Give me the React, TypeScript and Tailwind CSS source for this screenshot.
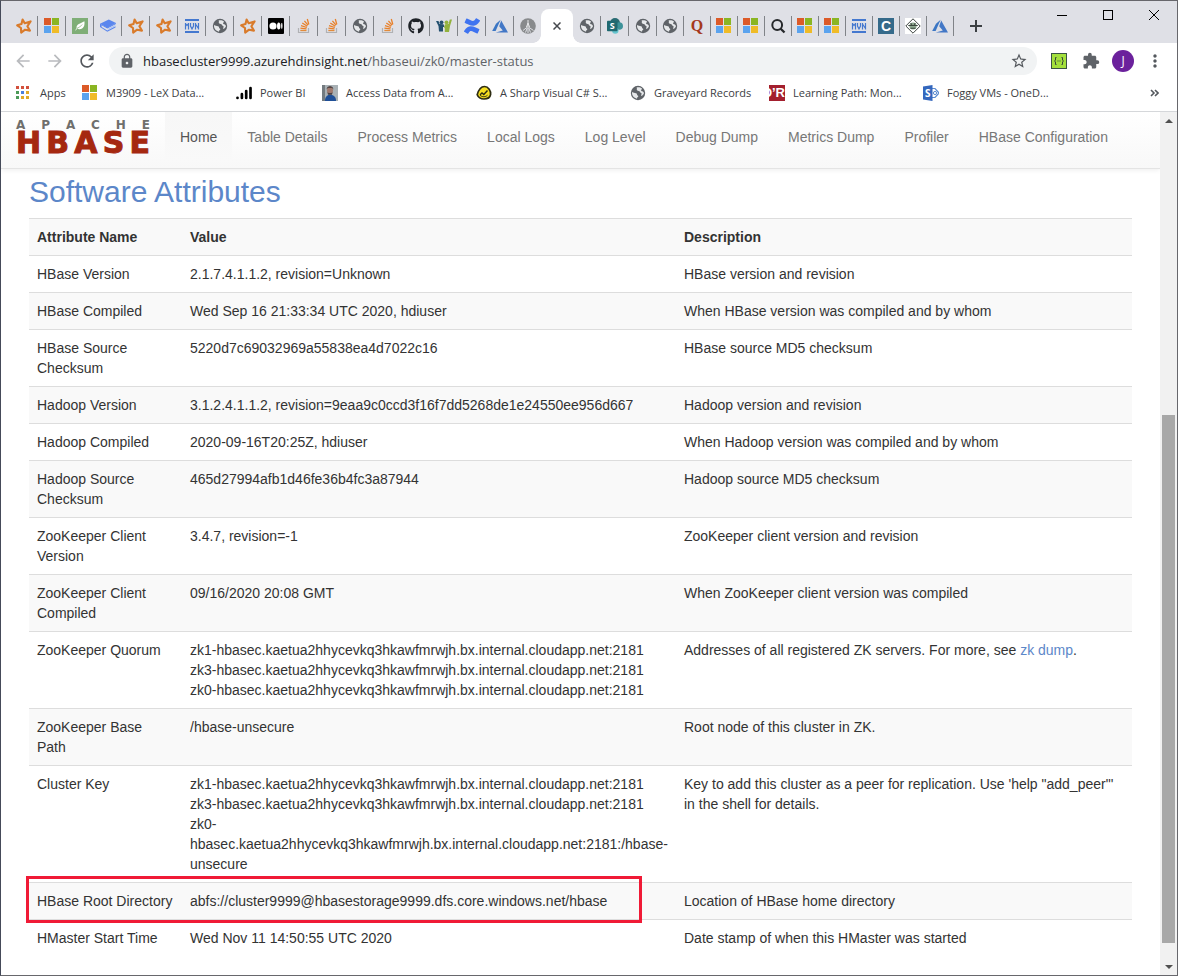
import type { ReactNode } from "react";
import {
  MdArrowBack,
  MdArrowForward,
  MdExtension,
  MdLock,
  MdMoreVert,
  MdRefresh,
  MdStarBorder,
} from "react-icons/md";
import { FaGithub } from "react-icons/fa";
import { SiConfluence } from "react-icons/si";

/* ---------- favicons ---------- */

const StarIcon = () => (
  <svg viewBox="0 0 16 16" className="size-4">
    <path
      d="M6.6 1.6 L8.7 5.2 L14.6 3.4 L11.4 8.3 L13.9 12.6 L9.1 11.7 L5.2 14.6 L5 10 L1.2 7.3 L5.5 5.9 Z"
      fill="none"
      stroke="#d97b2b"
      strokeWidth="2.100"
      strokeLinejoin="round"
    />
  </svg>
);

const MicrosoftIcon = () => (
  <svg viewBox="0 0 16 16" className="size-4">
    <path d="M0 0h7v7H0z" fill="#dc5a28" />
    <path d="M8 0h7v7H8z" fill="#8ab522" />
    <path d="M0 8h7v7H0z" fill="#5ba3ee" />
    <path d="M8 8h7v7H8z" fill="#efbb27" />
  </svg>
);

const LeafIcon = () => (
  <svg viewBox="0 0 16 16" className="size-4">
    <path d="M0 0h16v16H0z" fill="#7fae77" />
    <path d="M12.4 3.2 C13 7.500 11.500 11.200 7.600 11.200 C6.500 11.300 5.700 11 5.200 10.600 L3.800 12.600 L3.300 12.200 L4.600 10 C4 6 8.500 5.800 12.400 3.200 Z" fill="#fff" />
    <path d="M4.800 10.400 Q8 9.500 10.200 6.500" fill="none" stroke="#7fae77" strokeWidth="0.7" />
  </svg>
);

const BookIcon = () => (
  <svg viewBox="0 0 16 16" className="size-4">
    <path d="M0 5.800 L8.800 1.600 L16 5 L7.300 9.800 Z" fill="#5a86ee" />
    <path d="M0 5.800 V9 L7.300 13.800 L15.500 9.400 V8.200 L7.300 12.400 L1.600 8.900 V7.200 L7.300 10.600 L16 6 V5 L7.300 9.300 Z" fill="#5a86ee" />
    <path d="M8 10.700 L15.200 7 V8 L8 11.900 Z" fill="#a9c3f7" />
  </svg>
);

const MvnIcon = () => (
  <svg viewBox="0 0 16 16" className="size-4">
    <path d="M1 1h14v2H1zM1 13h14v2H1z" fill="#4478cf" />
    <path
      d="M1.500 11.500V5M1.500 5.500l1.500 2 1.500-2M4.500 5v6.500M6.500 5v3l1.500 3 1.500-3V5M11.500 11.500V5M11.500 6l3 4.500M14.500 5v6.500"
      fill="none"
      stroke="#4478cf"
      strokeWidth="1.200"
    />
  </svg>
);

const GlobeIcon = () => (
  <svg viewBox="0 0 16 16" className="size-4">
    <circle cx="8" cy="8" r="7.200" fill="#5f6368" />
    <path d="M2 7 C3.500 7.800 4.500 8 6 8.200 C7.200 8.500 7 9.600 7.300 10.200 C8.800 10.500 8.500 12 7.300 12.200 L7 13.700 C4 13 1.700 10.500 2 7 Z" fill="#e6e8ea" />
    <path d="M6.500 2.600 C7.500 3.300 6.300 4.300 7 5.200 C8 6.200 9.500 5.600 9.900 6.700 C10.200 8 11.300 7.600 11.600 8.500 C11.800 9.500 10.500 10.300 11.600 11 C12.600 10.300 13.700 9.500 14 8 C13.600 6.800 12.500 6 11.200 6 C10.800 4.500 12 4.700 12 3.600 C10.500 2.200 8 2 6.500 2.600 Z" fill="#e6e8ea" />
  </svg>
);

const MediumIcon = () => (
  <svg viewBox="0 0 16 16" className="size-4">
    <rect width="16" height="16" rx="1" fill="#000" />
    <circle cx="5" cy="8" r="3.600" fill="#fff" />
    <ellipse cx="10.700" cy="8" rx="1.700" ry="3.500" fill="#fff" />
    <ellipse cx="13.800" cy="8" rx="0.700" ry="3.200" fill="#fff" />
  </svg>
);

const StackIcon = () => (
  <svg viewBox="0 0 16 16" className="size-4" fill="none">
    <path d="M2.500 10v4.500h10V10" stroke="#b0b1b4" strokeWidth="1.200" />
    <path d="M4.300 12.500h6.200" stroke="#e28b3a" strokeWidth="1.400" />
    <path d="M4.400 10.100l6.100.8M5 7.600l5.800 1.900M6.300 5l5 3.300M8.400 2.800l3.600 4.400M11.300 1l1.500 5.500" stroke="#e8802a" strokeWidth="1.300" />
  </svg>
);

const GithubIcon = () => <FaGithub className="size-4 text-[#1f2328]" />;

const PeopleIcon = () => (
  <svg viewBox="0 0 16 16" className="size-4">
    <circle cx="5.500" cy="4.300" r="1.900" fill="#24506f" />
    <circle cx="10.500" cy="4.300" r="1.900" fill="#93b23c" />
    <path d="M0 3 L2.500 3 L3.500 6 L7.500 6.300 L8.500 9 L7 9 L7 13.500 L3 13.500 L2.500 8 Z" fill="#24506f" />
    <path d="M16 1.500 L13.800 1.500 L12.500 6 L9 6.300 L8 9.500 L8.800 10 L8.800 14 L13 14 L14 8 Z" fill="#93b23c" />
  </svg>
);

const ConfluenceIcon = () => <SiConfluence className="size-4 text-[#3f73f0]" />;

const AzureIcon = () => (
  <svg viewBox="0 0 16 16" className="size-4">
    <path d="M8.600 1.700 L4 5.700 L0.200 13 L3.600 13 Z" fill="#3b76c4" />
    <path d="M9.200 2.600 L7.200 8.200 L10.800 12.600 L3.800 14.400 L16 14.400 Z" fill="#4277c6" />
  </svg>
);

const SparkIcon = () => (
  <svg viewBox="0 0 16 16" className="size-4">
    <circle cx="8" cy="8" r="7.800" fill="#888a8c" />
    <path d="M8 2v6M8 5l-1.500 4h3z" stroke="#e7e8ea" strokeWidth="1" fill="none" />
    <path d="M6.800 9.500L3 12.500M9.200 9.500l4.300 3M7.200 10l-1.700 4.500M8.800 10l1.700 4.500M8 10v5" stroke="#dfe1e6" strokeWidth="1" />
  </svg>
);

const SharePointIcon = () => (
  <svg viewBox="0 0 16 16" className="size-4">
    <circle cx="8" cy="5" r="5" fill="#2a6c73" />
    <circle cx="12.200" cy="8" r="3.800" fill="#3d9299" />
    <circle cx="8.300" cy="12.600" r="3.200" fill="#67c5cf" />
    <rect y="2.800" width="10.500" height="10.400" rx="0.800" fill="#1f6970" />
    <text x="5.200" y="11.200" textAnchor="middle" fontFamily="Open Sans, sans-serif" fontSize="9" fontWeight="700" fill="#fff">S</text>
  </svg>
);

const QuoraIcon = () => (
  <span className="w-4 text-center font-['Liberation_Serif',serif] text-base leading-4 font-bold text-[#a5391b]">Q</span>
);

const SearchIcon = () => (
  <svg viewBox="0 0 16 16" className="size-4" fill="none" stroke="#26282b">
    <circle cx="7.200" cy="7" r="4.900" strokeWidth="2" />
    <path d="M10.700 10.700l3.800 3.800" strokeWidth="2.300" />
  </svg>
);

const CIcon = () => (
  <span className="size-4 bg-[#356a8a] text-center font-['Liberation_Sans',sans-serif] text-sm leading-4 font-bold text-white">C</span>
);

const DiamondIcon = () => (
  <svg viewBox="0 0 16 16" className="size-4">
    <path d="M0 0h16v16H0z" fill="#fff" />
    <path d="M8 0.800L15.200 8 8 15.200 0.800 8z" fill="none" stroke="#3d4440" strokeWidth="1" />
    <circle cx="8" cy="8" r="3.600" fill="#8fab91" />
    <path d="M3.300 7.500h9.400M5.500 5.500l1.500 1M10.500 5.500l-1.500 1M5.500 10.200h5" stroke="#39443c" strokeWidth="1.100" />
  </svg>
);

const AppsIcon = () => (
  <svg viewBox="0 0 16 16" className="size-4">
    <path d="M0 1h3v3H0zM5 1h3v3h-3zM10 1h3v3h-3z" fill="#d2503c" />
    <path d="M0 6h3v3H0zM0 11h3v3H0z" fill="#4c9a58" />
    <path d="M5 6h3v3h-3z" fill="#4a80df" />
    <path d="M10 6h3v3h-3zM5 11h3v3h-3zM10 11h3v3h-3z" fill="#dfa92b" />
  </svg>
);

const PowerBiIcon = () => (
  <svg viewBox="0 0 16 16" className="size-4" stroke="#000" strokeWidth="2.700" strokeLinecap="round">
    <path d="M1.500 12.800v.2M5.900 9.200v3.800M10.200 6v7M14.500 3v10" />
  </svg>
);

const PortraitIcon = () => (
  <svg viewBox="0 0 16 16" className="size-4">
    <path d="M0 0h16v16H0z" fill="#a9b1b5" />
    <path d="M0 0h3v16H0z" fill="#737b80" />
    <path d="M3 16c0-4 2-6 5-6.500 4 .500 6 2.500 6 6.500z" fill="#1f4f97" />
    <ellipse cx="8" cy="5.500" rx="3" ry="4" fill="#a0796d" />
    <path d="M4.600 4.500C4.500 0 11.500 0 11.400 4.500L10 2.800H6z" fill="#3c3536" />
    <path d="M5.500 7.200c1.500 1.200 3.500 1.200 5 0L10 9.700H6z" fill="#4b4244" />
  </svg>
);

const BasecampIcon = () => (
  <svg viewBox="0 0 16 16" className="size-4">
    <path d="M8.500 1.500 C12.500 1.500 15 6 14.600 9.500 C14 12.800 11 14 8 14 C5 14 2.500 13 1.200 9.800 C2.500 5 5 1.500 8.500 1.500 Z" fill="#f6df21" stroke="#2d2c12" strokeWidth="1.700" />
    <path d="M4 9.700l2-1.700 1.800 1.500 3.700-4" stroke="#2d2c12" strokeWidth="1.500" fill="none" />
    <path d="M4 10.200c2 2 5.500 2 7.500 0" stroke="#2d2c12" strokeWidth="1" fill="none" />
  </svg>
);

const OreillyIcon = () => (
  <span className="flex size-4 justify-end overflow-hidden bg-[#a31f2e] font-['Liberation_Sans',sans-serif] text-[13px] leading-4 font-bold text-white">
    O’R
  </span>
);

const OneDriveIcon = () => (
  <svg viewBox="0 0 16 16" className="size-4">
    <path d="M9 3.500l3 0 4 4.500-4 4.500H9" fill="none" stroke="#5b8bd0" strokeWidth="1.200" />
    <circle cx="12" cy="8" r="1.600" fill="none" stroke="#5b8bd0" strokeWidth="1" />
    <path d="M0 1.500L9.500 0v16L0 14.500z" fill="#3467bd" />
    <text x="4.800" y="11.800" textAnchor="middle" fontFamily="Open Sans, sans-serif" fontSize="10" fontWeight="700" fill="#fff">S</text>
  </svg>
);

const BracesIcon = () => (
  <svg viewBox="0 0 16 16" className="size-4" fill="none">
    <rect x="0.500" y="0.500" width="15" height="15" fill="#a3e03c" stroke="#3a5344" />
    <path d="M5.500 4.500h-1v2.500l-1 1 1 1v2.500h1M10.500 4.500h1v2.500l1 1-1 1v2.500h-1M6.500 8h1M8.500 8h1" stroke="#33453a" strokeWidth="1" />
  </svg>
);

/* ---------- browser chrome ---------- */

type Tab = { name: string; icon: () => ReactNode };

const tabsBefore: Tab[] = [
  { name: "Starred page", icon: StarIcon },
  { name: "Microsoft", icon: MicrosoftIcon },
  { name: "Spring", icon: LeafIcon },
  { name: "Docs", icon: BookIcon },
  { name: "Starred page", icon: StarIcon },
  { name: "Starred page", icon: StarIcon },
  { name: "Maven", icon: MvnIcon },
  { name: "Page", icon: GlobeIcon },
  { name: "Starred page", icon: StarIcon },
  { name: "Medium", icon: MediumIcon },
  { name: "Stack Overflow", icon: StackIcon },
  { name: "Stack Overflow", icon: StackIcon },
  { name: "Page", icon: GlobeIcon },
  { name: "Stack Overflow", icon: StackIcon },
  { name: "GitHub", icon: GithubIcon },
  { name: "Community", icon: PeopleIcon },
  { name: "Confluence", icon: ConfluenceIcon },
  { name: "Azure", icon: AzureIcon },
  { name: "Ambari", icon: SparkIcon },
];

const tabsAfter: Tab[] = [
  { name: "Page", icon: GlobeIcon },
  { name: "SharePoint", icon: SharePointIcon },
  { name: "Page", icon: GlobeIcon },
  { name: "Page", icon: GlobeIcon },
  { name: "Quora", icon: QuoraIcon },
  { name: "Microsoft", icon: MicrosoftIcon },
  { name: "Microsoft", icon: MicrosoftIcon },
  { name: "Search", icon: SearchIcon },
  { name: "Microsoft", icon: MicrosoftIcon },
  { name: "Microsoft", icon: MicrosoftIcon },
  { name: "Maven", icon: MvnIcon },
  { name: "Cloud", icon: CIcon },
  { name: "Diamond", icon: DiamondIcon },
  { name: "Azure", icon: AzureIcon },
];

function TabButton({ tab, narrow, divider }: { tab: Tab; narrow: boolean; divider: boolean }) {
  const Icon = tab.icon;
  return (
    <button
      aria-label={tab.name}
      className={`flex h-full shrink-0 items-center justify-between ${narrow ? "w-[27px] pl-[5px]" : "w-7 pl-1.5"}`}
    >
      <Icon />
      {divider && <span className="h-5 w-px bg-[#808388]" />}
    </button>
  );
}

function TabStrip() {
  return (
    <div className="flex h-[42px] bg-[#dfe0e6] pl-[9px]">
      <div className="flex min-w-0 flex-1 pt-2">
        {tabsBefore.map((tab, i) => (
          <TabButton key={i} tab={tab} narrow={false} divider={i < tabsBefore.length - 1} />
        ))}
        <div className="-ml-px flex w-8 shrink-0 items-end">
          <span className="-ml-2 size-2 shrink-0 bg-[radial-gradient(circle_at_0_0,transparent_7.5px,white_8px)]" />
          <div className="flex h-full w-8 shrink-0 items-center justify-center rounded-t-lg bg-white">
            <button aria-label="Close tab">
              <svg viewBox="0 0 8 8" className="size-2" stroke="#45484d" strokeWidth="1.5">
                <path d="M0.500 0.500l7 7M7.500 0.500l-7 7" />
              </svg>
            </button>
          </div>
          <span className="-mr-2 size-2 shrink-0 bg-[radial-gradient(circle_at_100%_0,transparent_7.5px,white_8px)]" />
        </div>
        {tabsAfter.map((tab, i) => (
          <TabButton key={i} tab={tab} narrow={i > 2} divider />
        ))}
        <button aria-label="New tab" className="ml-2 flex w-7 shrink-0 items-center justify-center">
          <svg viewBox="0 0 12 12" className="size-3" stroke="#3c4043" strokeWidth="2">
            <path d="M6 0v12M0 6h12" />
          </svg>
        </button>
      </div>
      <div className="flex h-7 shrink-0">
        <button aria-label="Minimize" className="flex w-[46px] items-center justify-center">
          <svg viewBox="0 0 10 10" className="size-2.5" stroke="#000">
            <path d="M0 5.500h10" />
          </svg>
        </button>
        <button aria-label="Maximize" className="flex w-[46px] items-center justify-center">
          <svg viewBox="0 0 10 10" className="size-2.5" fill="none" stroke="#000">
            <rect x="0.500" y="0.500" width="9" height="9" />
          </svg>
        </button>
        <button aria-label="Close" className="flex w-[46px] items-center justify-center">
          <svg viewBox="0 0 10 10" className="size-2.5" stroke="#000">
            <path d="M0 0l10 10M10 0L0 10" />
          </svg>
        </button>
      </div>
    </div>
  );
}

function ToolButton({ label, children }: { label: string; children: ReactNode }) {
  return (
    <button aria-label={label} className="flex w-8 shrink-0 items-center justify-center">
      {children}
    </button>
  );
}

function Toolbar() {
  return (
    <div className="flex h-9 bg-white px-1.5">
      <ToolButton label="Back">
        <MdArrowBack className="size-5 text-[#b9bbbe]" />
      </ToolButton>
      <ToolButton label="Forward">
        <MdArrowForward className="size-5 text-[#b9bbbe]" />
      </ToolButton>
      <ToolButton label="Reload">
        <MdRefresh className="size-5 text-[#54585d]" />
      </ToolButton>
      <div className="mx-1.5 my-1 flex min-w-0 flex-1 items-center rounded-full bg-[#f1f3f4] pr-[9px] pl-2.5">
        <MdLock className="size-4 shrink-0 text-[#5f6368]" />
        <p className="ml-2 min-w-0 flex-1 truncate text-[13px] leading-5 text-[#202124]">
          hbasecluster9999.azurehdinsight.net
          <span className="text-[#5f6368]">/hbaseui/zk0/master-status</span>
        </p>
        <button aria-label="Bookmark this page">
          <MdStarBorder className="size-[18px] text-[#54585d]" />
        </button>
      </div>
      <ToolButton label="JSON viewer">
        <BracesIcon />
      </ToolButton>
      <ToolButton label="Extensions">
        <MdExtension className="size-[18px] text-[#5f6368]" />
      </ToolButton>
      <ToolButton label="Profile">
        <span className="size-[22px] rounded-full bg-[#6b219c] text-center text-xs leading-[22px] text-white">J</span>
      </ToolButton>
      <ToolButton label="Menu">
        <MdMoreVert className="size-5 text-[#54585d]" />
      </ToolButton>
    </div>
  );
}

const bookmarks: { label: string; width: string; icon: () => ReactNode }[] = [
  { label: "Apps", width: "w-[66px]", icon: AppsIcon },
  { label: "M3909 - LeX Data...", width: "w-[154px]", icon: MicrosoftIcon },
  { label: "Power BI", width: "w-[86px]", icon: PowerBiIcon },
  { label: "Access Data from A...", width: "w-[154px]", icon: PortraitIcon },
  { label: "A Sharp Visual C# S...", width: "w-[154px]", icon: BasecampIcon },
  { label: "Graveyard Records", width: "w-[139px]", icon: GlobeIcon },
  { label: "Learning Path: Mon...", width: "w-[154px]", icon: OreillyIcon },
  { label: "Foggy VMs - OneD...", width: "w-[154px]", icon: OneDriveIcon },
];

function BookmarksBar() {
  return (
    <div className="flex h-[33px] items-center border-b border-[#d5d7da] bg-white pb-1 pl-[15px]">
      {bookmarks.map(({ label, width, icon: Icon }) => (
        <a key={label} href="#" className={`flex shrink-0 items-center gap-2 text-[11px] leading-4 whitespace-nowrap text-[#3c4043] ${width}`}>
          <span className="flex w-4 shrink-0">
            <Icon />
          </span>
          {label}
        </a>
      ))}
      <button aria-label="More bookmarks" className="mr-[18px] ml-auto">
        <svg viewBox="0 0 9 8" className="h-2 w-[9px]" fill="none" stroke="#54585d" strokeWidth="1.600">
          <path d="M1 1l3 3-3 3M5 1l3 3-3 3" />
        </svg>
      </button>
    </div>
  );
}

function Scrollbar() {
  return (
    <div aria-hidden="true" className="flex w-[17px] shrink-0 flex-col bg-[#f1f1f1]">
      <span className="flex h-[17px] items-center justify-center">
        <svg viewBox="0 0 8 4" className="h-1 w-2" fill="#505050">
          <path d="M4 0l4 4H0z" />
        </svg>
      </span>
      <span className="flex-[286]" />
      <span className="mx-0.5 flex-[528] bg-[#a8a8a8]" />
      <span className="flex-[15]" />
      <span className="flex h-[17px] items-center justify-center">
        <svg viewBox="0 0 8 4" className="h-1 w-2" fill="#505050">
          <path d="M0 0h8L4 4z" />
        </svg>
      </span>
    </div>
  );
}

/* ---------- page ---------- */

function Letters({ word }: { word: string }) {
  return (
    <>
      {word.split("").map((c, i) => (
        <span key={i}>{c}</span>
      ))}
    </>
  );
}

function Logo() {
  return (
    <a href="#" aria-label="Apache HBase" className="mr-[15px] block w-[134px] shrink-0 pt-[7px] font-['DejaVu_Sans',sans-serif] font-bold">
      <span className="flex justify-between text-xs leading-[13px] text-[#6f6f6c]">
        <Letters word="APACHE" />
      </span>
      <span className="flex justify-between text-[30px] leading-[22px] text-[#a52810] [-webkit-text-stroke:1px]">
        <Letters word="HBASE" />
      </span>
    </a>
  );
}

const navItems = [
  "Home",
  "Table Details",
  "Process Metrics",
  "Local Logs",
  "Log Level",
  "Debug Dump",
  "Metrics Dump",
  "Profiler",
  "HBase Configuration",
];

const rows: { name: string; value: string[]; description: ReactNode; marked?: boolean }[] = [
  { name: "HBase Version", value: ["2.1.7.4.1.1.2, revision=Unknown"], description: "HBase version and revision" },
  { name: "HBase Compiled", value: ["Wed Sep 16 21:33:34 UTC 2020, hdiuser"], description: "When HBase version was compiled and by whom" },
  { name: "HBase Source Checksum", value: ["5220d7c69032969a55838ea4d7022c16"], description: "HBase source MD5 checksum" },
  { name: "Hadoop Version", value: ["3.1.2.4.1.1.2, revision=9eaa9c0ccd3f16f7dd5268de1e24550ee956d667"], description: "Hadoop version and revision" },
  { name: "Hadoop Compiled", value: ["2020-09-16T20:25Z, hdiuser"], description: "When Hadoop version was compiled and by whom" },
  { name: "Hadoop Source Checksum", value: ["465d27994afb1d46fe36b4fc3a87944"], description: "Hadoop source MD5 checksum" },
  { name: "ZooKeeper Client Version", value: ["3.4.7, revision=-1"], description: "ZooKeeper client version and revision" },
  { name: "ZooKeeper Client Compiled", value: ["09/16/2020 20:08 GMT"], description: "When ZooKeeper client version was compiled" },
  {
    name: "ZooKeeper Quorum",
    value: [
      "zk1-hbasec.kaetua2hhycevkq3hkawfmrwjh.bx.internal.cloudapp.net:2181",
      "zk3-hbasec.kaetua2hhycevkq3hkawfmrwjh.bx.internal.cloudapp.net:2181",
      "zk0-hbasec.kaetua2hhycevkq3hkawfmrwjh.bx.internal.cloudapp.net:2181",
    ],
    description: (
      <>
        Addresses of all registered ZK servers. For more, see{" "}
        <a href="#" className="text-[#5c87c9]">
          zk dump
        </a>
        .
      </>
    ),
  },
  { name: "ZooKeeper Base Path", value: ["/hbase-unsecure"], description: "Root node of this cluster in ZK." },
  {
    name: "Cluster Key",
    value: [
      "zk1-hbasec.kaetua2hhycevkq3hkawfmrwjh.bx.internal.cloudapp.net:2181",
      "zk3-hbasec.kaetua2hhycevkq3hkawfmrwjh.bx.internal.cloudapp.net:2181",
      "zk0-hbasec.kaetua2hhycevkq3hkawfmrwjh.bx.internal.cloudapp.net:2181:/hbase-unsecure",
    ],
    description: "Key to add this cluster as a peer for replication. Use 'help \"add_peer\"' in the shell for details.",
  },
  {
    name: "HBase Root Directory",
    value: ["abfs://cluster9999@hbasestorage9999.dfs.core.windows.net/hbase"],
    description: "Location of HBase home directory",
    marked: true,
  },
  { name: "HMaster Start Time", value: ["Wed Nov 11 14:50:55 UTC 2020"], description: "Date stamp of when this HMaster was started" },
];

function AttributesTable() {
  return (
    <table className="w-full table-fixed border-separate border-spacing-0 text-left text-[#333] [&_td]:border-t [&_td]:border-[#ddd] [&_td]:p-2 [&_td]:align-top [&_th]:border-t [&_th]:border-[#ddd] [&_th]:p-2">
      <tbody>
        <tr className="bg-[#f9f9f9]">
          <th className="w-[153px]">Attribute Name</th>
          <th className="w-[494px]">Value</th>
          <th>Description</th>
        </tr>
        {rows.map((row) => (
          <tr key={row.name} className="odd:bg-[#f9f9f9]">
            <td className={row.marked ? "relative" : ""}>
              {row.name}
              {row.marked && (
                <span className="pointer-events-none absolute -top-[7px] -left-[3px] h-[47px] w-[616px] border-3 border-[#f01a36]" />
              )}
            </td>
            <td>
              {row.value.map((line) => (
                <div key={line}>{line}</div>
              ))}
            </td>
            <td>{row.description}</td>
          </tr>
        ))}
      </tbody>
    </table>
  );
}

export default function App() {
  return (
    <div className="flex h-screen flex-col border border-[#67676c] border-l-[#454a59] bg-white font-['Open_Sans','Noto_Sans',sans-serif]">
      <TabStrip />
      <Toolbar />
      <BookmarksBar />
      <div className="flex min-h-0 flex-1">
        <div className="min-w-0 flex-1 overflow-hidden font-['Liberation_Sans',Arial,sans-serif] text-sm leading-5">
          <nav className="flex h-[57px] items-start border-b border-[#e4e4e4] bg-linear-to-b from-white to-[#f8f8f8] pl-[15px] shadow-[0_1px_5px_rgba(0,0,0,0.075)]">
            <Logo />
            {navItems.map((item, i) => (
              <a
                key={item}
                href="#"
                className={`shrink-0 p-[15px] whitespace-nowrap ${i === 0 ? "bg-linear-to-b from-[#f7f7f7] to-[#f9f9f9] text-[#555]" : "text-[#777]"}`}
              >
                {item}
              </a>
            ))}
          </nav>
          <main className="px-7 pt-1.5">
            <h2 className="mb-2.5 text-[30px] leading-[33px] text-[#5c87c9]">Software Attributes</h2>
            <AttributesTable />
          </main>
        </div>
        <Scrollbar />
      </div>
    </div>
  );
}
